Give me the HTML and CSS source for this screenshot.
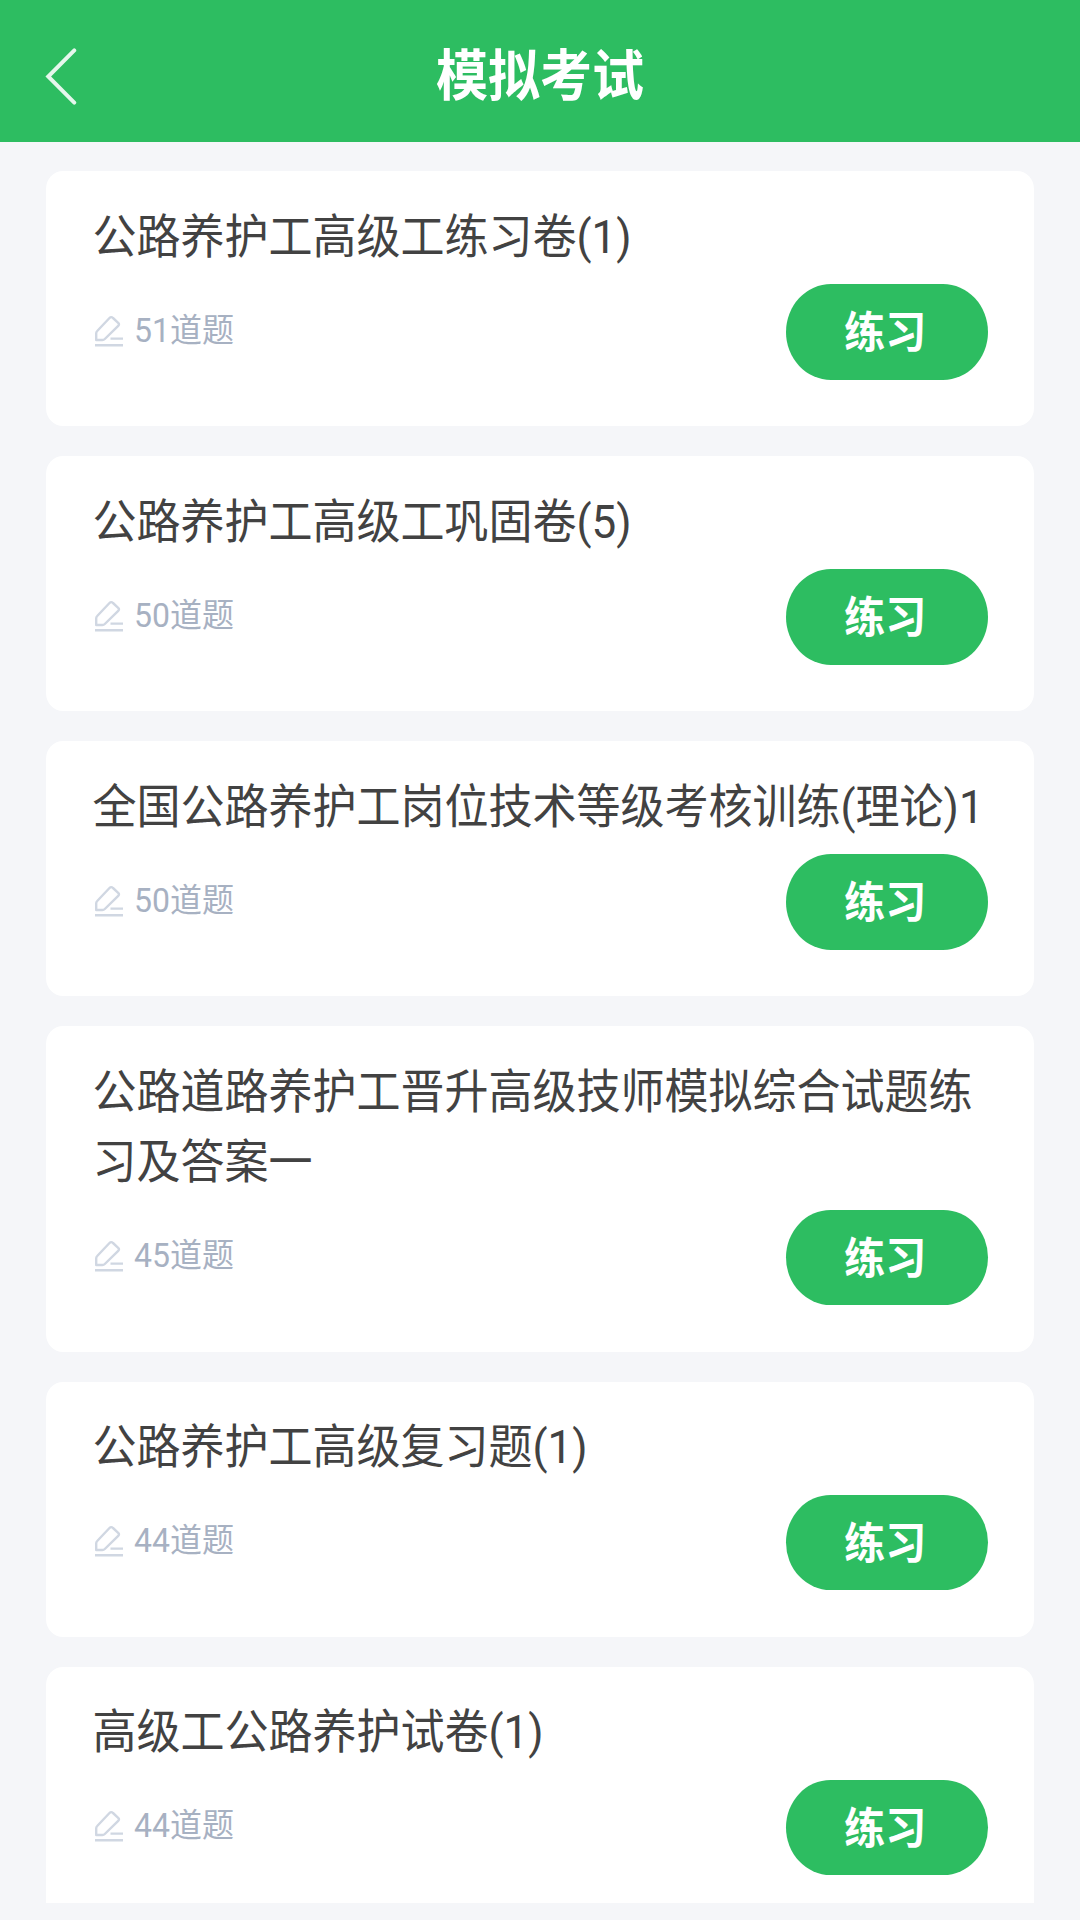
FILE: index.html
```html
<!DOCTYPE html>
<html lang="zh-CN">
<head>
<meta charset="utf-8">
<title>模拟考试</title>
<link rel="stylesheet" href="styles.css">
</head>
<body>
<svg class="symbols" width="0" height="0">
  <symbol id="pen" viewBox="0 0 28 32">
    <path d="M1.2 25V18.5Q1.2 17 2.2 16L14.5 3Q16.2 1.2 18 3L23.2 7.8Q24.8 9.2 23.2 10.8L9.8 24Q8.8 25 7.4 25Z" />
    <path d="M15.5 23.6H28M0 30.2H28" />
  </symbol>
</svg>
<header class="bar">
  <svg class="back" viewBox="0 0 32 58"><path d="M29.5 2.5L3 29L29.5 55.5" /></svg>
  <h1 class="heading">模拟考试</h1>
</header>
<main class="list">
  <article class="card">
    <h2 class="title">公路养护工高级工练习卷(1)</h2>
    <div class="row"><div class="meta"><svg class="pen"><use href="#pen" /></svg><span class="count">51道题</span></div><button class="go"><span class="label">练习</span></button></div>
  </article>
  <article class="card">
    <h2 class="title">公路养护工高级工巩固卷(5)</h2>
    <div class="row"><div class="meta"><svg class="pen"><use href="#pen" /></svg><span class="count">50道题</span></div><button class="go"><span class="label">练习</span></button></div>
  </article>
  <article class="card">
    <h2 class="title">全国公路养护工岗位技术等级考核训练(理论)1</h2>
    <div class="row"><div class="meta"><svg class="pen"><use href="#pen" /></svg><span class="count">50道题</span></div><button class="go"><span class="label">练习</span></button></div>
  </article>
  <article class="card">
    <h2 class="title title-two-lines">公路道路养护工晋升高级技师模拟综合试题练习及答案一</h2>
    <div class="row"><div class="meta"><svg class="pen"><use href="#pen" /></svg><span class="count">45道题</span></div><button class="go"><span class="label">练习</span></button></div>
  </article>
  <article class="card">
    <h2 class="title">公路养护工高级复习题(1)</h2>
    <div class="row"><div class="meta"><svg class="pen"><use href="#pen" /></svg><span class="count">44道题</span></div><button class="go"><span class="label">练习</span></button></div>
  </article>
  <article class="card">
    <h2 class="title">高级工公路养护试卷(1)</h2>
    <div class="row"><div class="meta"><svg class="pen"><use href="#pen" /></svg><span class="count">44道题</span></div><button class="go"><span class="label">练习</span></button></div>
  </article>
</main>
</body>
</html>
```
FILE: styles.css
```css
* { box-sizing: border-box; }
html, body { height: 100%; }
body {
  margin: 0;
  width: 1080px;
  height: 1920px;
  overflow: hidden;
  display: flex;
  flex-direction: column;
  padding-bottom: 17px;
  background: #f5f6f9;
  font-family: Roboto, "Noto Sans CJK SC", sans-serif;
}
.symbols { position: absolute; }
.bar {
  flex: none;
  height: 141.5px;
  display: grid;
  grid-template-columns: 200px 1fr 200px;
  align-items: center;
  background: #2dbd61;
  color: #fff;
}
.back {
  width: 32px;
  height: 57px;
  margin: 12px 0 0 45px;
  fill: none;
  stroke: #fff;
  stroke-opacity: .88;
  stroke-width: 4;
  stroke-linecap: round;
}
.heading {
  margin: 12px 0 0;
  text-align: center;
  font-size: 52px;
  line-height: 76px;
  font-weight: 700;
  transform: scaleY(1.05);
}
.list {
  flex: 1;
  min-height: 0;
  overflow: hidden;
  display: flex;
  flex-direction: column;
  gap: 30px;
  padding: 29.5px 46px 0;
}
.card {
  flex: none;
  padding: 30.5px 46px 46.5px 46.5px;
  border-radius: 17px / 18px;
  background: #fff;
}
.title {
  width: 900px;
  margin: 0;
  font-size: 44px;
  line-height: 66px;
  font-weight: 400;
  color: #424242;
  transform: scaleY(1.065);
  transform-origin: 0 0;
  word-break: break-all;
}
.title-two-lines { padding-bottom: 4.5px; }
.row {
  display: flex;
  justify-content: space-between;
  align-items: center;
  margin-top: 16.5px;
}
.meta {
  display: flex;
  align-items: center;
  gap: 11.5px;
  padding: 0 0 2px 2px;
  color: #a7b1c2;
}
.pen {
  width: 28px;
  height: 32px;
  fill: none;
  stroke: #d0d7e2;
  stroke-width: 2.4;
  stroke-linejoin: round;
}
.count {
  font-size: 32px;
  line-height: 46px;
  transform: scaleY(1.04);
}
.go {
  width: 202.5px;
  height: 95.5px;
  border: 0;
  padding: 3px 3px 0 0;
  border-radius: 45px / 48px;
  background: #2dbd61;
  color: #fff;
  font: 700 41px/60px Roboto, "Noto Sans CJK SC", sans-serif;
}
.label {
  display: block;
  transform: scaleY(1.06);
}
```
